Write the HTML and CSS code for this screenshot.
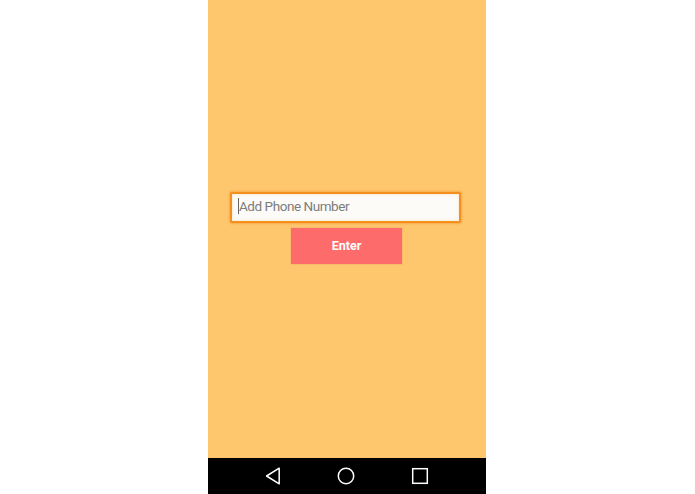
FILE: index.html
```html
<!DOCTYPE html>
<html>
<head>
<meta charset="utf-8">
<link rel="stylesheet" href="styles.css">
</head>
<body>
<div class="phone">
  <div class="screen">
    <div class="field"><span class="caret"></span><span class="placeholder">Add Phone Number</span></div>
    <div class="button">Enter</div>
  </div>
  <div class="nav">
    <svg class="icon" width="16" height="18" viewBox="0 0 16 18"><path d="M14.2 1.2 L1.6 9 L14.2 16.8 Z" fill="none" stroke="#fff" stroke-width="1.5" stroke-linejoin="round"/></svg>
    <svg class="icon" width="18" height="18" viewBox="0 0 18 18"><circle cx="9" cy="9" r="7.7" fill="none" stroke="#fff" stroke-width="1.5"/></svg>
    <svg class="icon" width="18" height="18" viewBox="0 0 18 18"><rect x="1.7" y="1.7" width="14.6" height="14.6" fill="none" stroke="#fff" stroke-width="1.5"/></svg>
  </div>
</div>
</body>
</html>
```
FILE: styles.css
```css
html, body {
  margin: 0;
  padding: 0;
  background: #ffffff;
}
body {
  padding-left: 208px;
  font-family: Roboto, "Liberation Sans", sans-serif;
}
.phone {
  width: 278px;
  height: 494px;
  display: flex;
  flex-direction: column;
}
.screen {
  height: 458px;
  background: #fec76e;
  padding-top: 192px;
  box-sizing: border-box;
  display: flex;
  flex-direction: column;
}
.field {
  margin-left: 22px;
  width: 231px;
  height: 31px;
  box-sizing: border-box;
  border: 2px solid #f5901e;
  border-radius: 2px;
  background: #fdfbf7;
  box-shadow: 0 0 2px 1px rgba(240, 140, 30, 0.45), inset 0 0 3px rgba(240, 150, 40, 0.25);
  display: flex;
  align-items: center;
  padding-left: 6px;
  padding-bottom: 3px;
}
.caret {
  width: 1px;
  height: 16px;
  background: #666;
}
.placeholder {
  font-size: 13.5px;
  color: #7c7c7c;
  letter-spacing: -0.45px;
}
.button {
  margin-top: 5px;
  margin-left: 83px;
  width: 111px;
  height: 36px;
  background: #fe6b6b;
  color: #ffffff;
  font-weight: bold;
  font-size: 12.5px;
  display: flex;
  align-items: center;
  justify-content: center;
  padding-bottom: 2px;
  box-sizing: border-box;
  box-shadow: 0 0 1px rgba(200, 80, 60, 0.5);
}
.nav {
  height: 36px;
  background: #000000;
  display: flex;
  align-items: center;
  padding-left: 57px;
  gap: 56px;
}
.icon {
  display: block;
}
```
